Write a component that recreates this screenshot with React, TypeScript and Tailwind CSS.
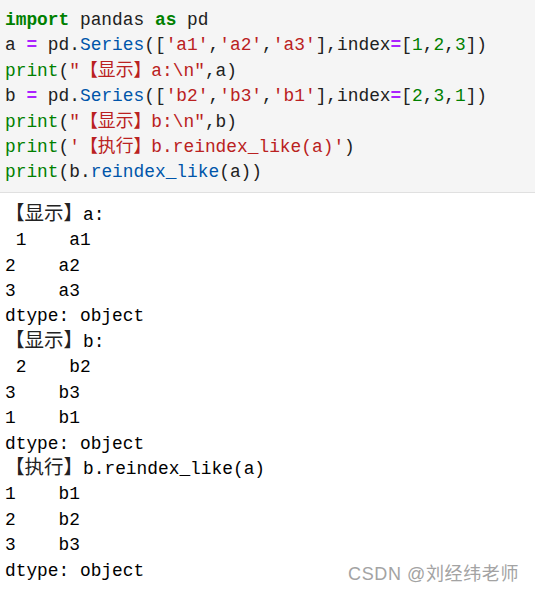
const K = ({ children }: { children: React.ReactNode }) => (
  <span className="font-bold text-[#008000]">{children}</span>
);
const B = ({ children }: { children: React.ReactNode }) => <span className="text-[#008000]">{children}</span>;
const O = ({ children }: { children: React.ReactNode }) => (
  <span className="font-bold text-[#aa22ff]">{children}</span>
);
const P = ({ children }: { children: React.ReactNode }) => <span className="text-[#0055aa]">{children}</span>;
const S = ({ children }: { children: React.ReactNode }) => <span className="text-[#ba2121]">{children}</span>;
const N = ({ children }: { children: React.ReactNode }) => <span className="text-[#008000]">{children}</span>;

// [cjk tag, rest of line]
const output: [string, string][] = [
  ["【显示】", "a:"],
  ["", " 1    a1"],
  ["", "2    a2"],
  ["", "3    a3"],
  ["", "dtype: object"],
  ["【显示】", "b:"],
  ["", " 2    b2"],
  ["", "3    b3"],
  ["", "1    b1"],
  ["", "dtype: object"],
  ["【执行】", "b.reindex_like(a)"],
  ["", "1    b1"],
  ["", "2    b2"],
  ["", "3    b3"],
  ["", "dtype: object"],
];

export default function App() {
  return (
    <div
      className="relative w-[535px] h-[593px] overflow-hidden bg-white text-[17.85px] leading-[25.4px] whitespace-pre"
      style={{ fontFamily: '"Liberation Mono", "Noto Sans CJK SC", monospace' }}
    >
      <div className="bg-[#f5f5f5] border-b border-[#e0e0e0] pl-[5px] pt-[8px] pb-[6px] text-[#212121]">
        <div>
          <K>import</K> pandas <K>as</K> pd
        </div>
        <div>
          a <O>=</O> pd.<P>Series</P>([<S>'a1'</S>,<S>'a2'</S>,<S>'a3'</S>],index<O>=</O>[<N>1</N>,<N>2</N>,<N>3</N>])
        </div>
        <div>
          <B>print</B>(<S>"【显示】a:\n"</S>,a)
        </div>
        <div>
          b <O>=</O> pd.<P>Series</P>([<S>'b2'</S>,<S>'b3'</S>,<S>'b1'</S>],index<O>=</O>[<N>2</N>,<N>3</N>,<N>1</N>])
        </div>
        <div>
          <B>print</B>(<S>"【显示】b:\n"</S>,b)
        </div>
        <div>
          <B>print</B>(<S>'【执行】b.reindex_like(a)'</S>)
        </div>
        <div>
          <B>print</B>(b.<P>reindex_like</P>(a))
        </div>
      </div>
      <div className="pl-[5px] pt-[10px] text-black">
        {output.map(([tag, rest], i) => (
          <div key={i}>
            {tag && <span className="text-[19.5px] leading-[20px] text-[#222]">{tag}</span>}
            {rest}
          </div>
        ))}
      </div>
      <div
        className="absolute right-[16px] bottom-[7px] text-[18px] leading-[24px] tracking-[0.6px] text-[#a3a3a3] [text-shadow:0_0_1px_#fff]"
        style={{ fontFamily: '"Liberation Sans", "Noto Sans CJK SC", sans-serif' }}
      >
        CSDN @刘经纬老师
      </div>
    </div>
  );
}
